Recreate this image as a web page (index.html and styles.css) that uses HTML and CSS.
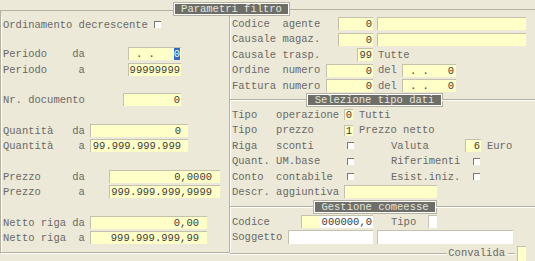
FILE: index.html
```html
<!DOCTYPE html>
<html lang="it">
<head>
  <meta charset="UTF-8" />
  <title>Parametri filtro</title>
  <link rel="stylesheet" href="styles.css">
</head>
<body>

<div class="form">
  <div class="legend top">
    <span class="line lead-top"></span>
    <span class="title t-param">Parametri filtro</span>
    <span class="line fill"></span>
  </div>

  <div class="body">
    <!-- colonna sinistra -->
    <div class="left">
      <div class="row r-ord">Ordinamento decrescente <span class="chk"></span></div>
      <div class="row gap14"><span class="lbl w125">Periodo    da</span><span class="fld w53 pr1">. .   <span class="sel">0</span></span></div>
      <div class="row gap1"><span class="lbl w125">Periodo     a</span><span class="fld w53 pr1">99999999</span></div>
      <div class="row gap15"><span class="lbl w120">Nr. documento</span><span class="fld w58 pr1">0</span></div>
      <div class="row gap16"><span class="lbl w87">Quantità   da</span><span class="fld w98 pr7">0</span></div>
      <div class="row"><span class="lbl w87">Quantità    a</span><span class="fld w98 pr7">99.999.999.999</span></div>
      <div class="row gap16"><span class="lbl w106">Prezzo     da</span><span class="fld w111 pr8">0,0000</span></div>
      <div class="row"><span class="lbl w106">Prezzo      a</span><span class="fld w111 pr8">999.999.999,9999</span></div>
      <div class="row gap16"><span class="lbl w87">Netto riga da</span><span class="fld w117 pr8">0,00</span></div>
      <div class="row"><span class="lbl w87">Netto riga  a</span><span class="fld w117 pr8">999.999.999,99</span></div>
    </div>

    <!-- colonna destra -->
    <div class="right">
      <div class="row h15"><span class="lbl w106">Codice  agente</span><span class="fld w35 pr1">0</span><span class="fld w149 ml4"></span></div>
      <div class="row h16"><span class="lbl w106">Causale magaz.</span><span class="fld w35 pr1">0</span><span class="fld w149 ml4"></span></div>
      <div class="row h15"><span class="lbl w125">Causale trasp.</span><span class="fld w16 pr1">99</span><span class="ml5">Tutte</span></div>
      <div class="row h16"><span class="lbl w94">Ordine  numero</span><span class="fld w47 pr1">0</span><span class="ml5 w24">del</span><span class="fld w54 pr2">. .   0</span></div>
      <div class="row h15"><span class="lbl w94">Fattura numero</span><span class="fld w47 pr1">0</span><span class="ml5 w24">del</span><span class="fld w54 pr2">. .   0</span></div>

      <div class="legend sep h14">
        <span class="line lead-sel"></span>
        <span class="title t-sel">Selezione tipo dati</span>
        <span class="line"></span>
      </div>

      <div class="row h15"><span class="lbl w112">Tipo   operazione</span><span class="fld small">0</span><span class="ml6">Tutti</span></div>
      <div class="row h16"><span class="lbl w112">Tipo   prezzo</span><span class="fld small">1</span><span class="ml6">Prezzo netto</span></div>
      <div class="row h15"><span class="lbl w115">Riga   sconti</span><span class="chk"></span><span class="lbl c2 w74">Valuta</span><span class="fld w16 pr1">6</span><span class="ml6">Euro</span></div>
      <div class="row h16"><span class="lbl w115">Quant. UM.base</span><span class="chk"></span><span class="lbl c2 w82">Riferimenti</span><span class="chk"></span></div>
      <div class="row h15"><span class="lbl w115">Conto  contabile</span><span class="chk"></span><span class="lbl c2 w82">Esist.iniz.</span><span class="chk"></span></div>
      <div class="row h15"><span class="lbl w112">Descr. aggiuntiva</span><span class="fld w93"></span></div>

      <div class="legend sep h15">
        <span class="line lead-ges"></span>
        <span class="title t-ges">Gestione comeesse</span>
        <span class="line"></span>
      </div>

      <div class="row h15"><span class="lbl w69">Codice</span><span class="fld w72 split"><span class="hl">000000,0</span></span><span class="lbl tipo">Tipo</span><span class="fld white w9"></span></div>
      <div class="row h16"><span class="lbl w56">Soggetto</span><span class="fld white w85 tall"></span><span class="fld white w136 tall ml4"></span></div>
      <div class="row h16 conv">
        <span class="line grow"></span>
        <span class="conv-text">Convalida</span>
        <span class="line stub"></span>
        <span class="fld box"></span>
      </div>
    </div>
  </div>
</div>

</body>
</html>
```

FILE: styles.css
```css
* {
  box-sizing: border-box;
}
body {
  margin: 0;
  background-color: #ece9d8;
  font-family: "Liberation Mono", "Courier New", monospace;
  font-size: 10.5px;
  color: #6a6a66;
}
.form {
  width: 535px;
  height: 261px;
  overflow: hidden;
}

/* titoli di gruppo */
.legend {
  display: flex;
  height: 13px;
  margin-top: 3px;
}
.legend .line {
  flex: 1;
  align-self: center;
  height: 2px;
  border-top: 1px solid #b4b19f;
  border-bottom: 1px solid #fff;
}
.legend .lead-top {
  flex: none;
  width: 174px;
  align-self: flex-end;
  height: 6px;
  border-bottom: none;
  border-left: 1px solid #b4b19f;
}
.legend .fill {
  align-self: flex-end;
  height: 7px;
  border-bottom: none;
}
.title {
  height: 12px;
  line-height: 10px;
  text-align: center;
  white-space: pre;
  background-color: #6e6e68;
  color: #e4e4dc;
  border: 1px solid #fff;
  box-shadow: 0 0 0 1px #b4b19f;
}
.t-param { width: 115px; }
.t-sel { width: 135px; }
.t-ges { width: 122px; }
.legend.sep {
  margin-top: 0;
  align-items: center;
}
.legend.h14 { height: 14px; }
.legend.h15 { height: 15px; }
.legend .lead-sel { flex: none; width: 77px; }
.legend .lead-ges { flex: none; width: 84px; }

/* colonne */
.body {
  display: flex;
  align-items: flex-start;
}
.left {
  width: 230px;
  height: 237px;
  padding-left: 2px;
  border-left: 1px solid #b4b19f;
  border-right: 1px solid #b4b19f;
  border-bottom: 1px solid #b4b19f;
  box-shadow: inset 1px 0 #fff, 1px 1px 0 #fff;
}
.right {
  flex: 1;
}
.right .row {
  padding-left: 2px;
}

/* righe */
.row {
  display: flex;
  align-items: center;
  height: 15px;
  white-space: pre;
}
.row.h15 { height: 15px; }
.row.h16 { height: 16px; }
.r-ord { margin-top: 1px; }
.gap1 { margin-top: 1px; }
.gap14 { margin-top: 14px; }
.gap15 { margin-top: 15px; }
.gap16 { margin-top: 16px; }

.lbl {
  flex: none;
  white-space: pre;
}
.c2 { margin-left: 37px; }
.tipo { margin-left: 18px; width: 37px; }

.w9 { width: 9px; }
.w16 { width: 16px; }
.w24 { width: 24px; }
.w35 { width: 35px; }
.w47 { width: 47px; }
.w53 { width: 53px; }
.w54 { width: 54px; }
.w56 { width: 56px; }
.w58 { width: 58px; }
.w69 { width: 69px; }
.w72 { width: 72px; }
.w74 { width: 74px; }
.w82 { width: 82px; }
.w85 { width: 85px; }
.w87 { width: 87px; }
.w93 { width: 93px; }
.w94 { width: 94px; }
.w98 { width: 98px; }
.w106 { width: 106px; }
.w111 { width: 111px; }
.w112 { width: 112px; }
.w115 { width: 115px; }
.w117 { width: 117px; }
.w120 { width: 120px; }
.w125 { width: 125px; }
.w136 { width: 136px; }
.w149 { width: 149px; }
.ml4 { margin-left: 4px; }
.ml5 { margin-left: 5px; }
.ml6 { margin-left: 6px; }

/* campi */
.fld {
  flex: none;
  display: block;
  height: 13px;
  line-height: 12px;
  text-align: right;
  white-space: pre;
  color: #3c3c3a;
  background-color: #ffffc8;
  border-top: 1px solid #c4c1ae;
  border-left: 1px solid #c4c1ae;
}
.pr1 { padding-right: 1px; }
.pr2 { padding-right: 2px; }
.pr7 { padding-right: 7px; }
.pr8 { padding-right: 8px; }
.fld.small {
  width: 9px;
  height: 11px;
  line-height: 10px;
  text-align: center;
}
.fld.white {
  background-color: #fff;
}
.fld.tall {
  height: 14px;
}
.fld.split {
  display: flex;
  justify-content: flex-end;
}
.hl {
  background-color: #fff;
  padding: 0 1px 0 2px;
  height: 12px;
}
.sel {
  background-color: #316ac5;
  color: #fff;
}

.chk {
  flex: none;
  display: inline-block;
  width: 7px;
  height: 7px;
  background-color: #fff;
  border-top: 1px solid #7a7a72;
  border-left: 1px solid #7a7a72;
}

/* convalida */
.row.conv {
  padding-left: 0;
  padding-right: 9px;
}
.conv .line {
  height: 2px;
  border-top: 1px solid #b4b19f;
  border-bottom: 1px solid #fff;
  margin-top: 2px;
}
.conv .grow { flex: 1; }
.conv .stub { width: 7px; }
.conv-text {
  margin: 0 3px 0 1px;
}
.fld.box {
  width: 9px;
  height: 15px;
  margin-left: 2px;
}
```
